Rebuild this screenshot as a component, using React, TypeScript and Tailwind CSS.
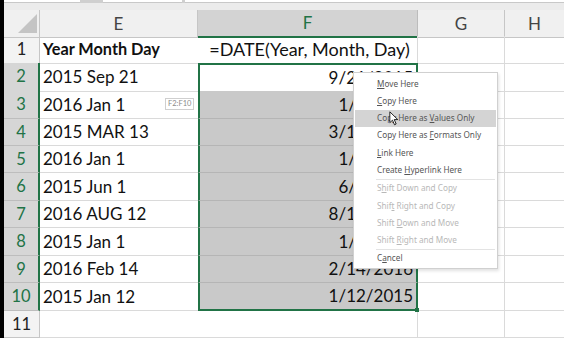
import React from "react";

const GREEN = "#217346";

type Row = { n: number; e: string; f: string; h: string };

const ROWS: Row[] = [
  { n: 1, e: "Year Month Day", f: "=DATE(Year, Month, Day)", h: "h-[27px]" },
  { n: 2, e: "2015 Sep 21", f: "9/21/2015", h: "h-[28px]" },
  { n: 3, e: "2016 Jan 1", f: "1/1/2016", h: "h-[28px]" },
  { n: 4, e: "2015 MAR 13", f: "3/13/2015", h: "h-[27px]" },
  { n: 5, e: "2016 Jan 1", f: "1/1/2016", h: "h-[27px]" },
  { n: 6, e: "2015 Jun 1", f: "6/1/2015", h: "h-[28px]" },
  { n: 7, e: "2016 AUG 12", f: "8/12/2016", h: "h-[27px]" },
  { n: 8, e: "2015 Jan 1", f: "1/1/2015", h: "h-[28px]" },
  { n: 9, e: "2016 Feb 14", f: "2/14/2016", h: "h-[27px]" },
  { n: 10, e: "2015 Jan 12", f: "1/12/2015", h: "h-[28px]" },
  { n: 11, e: "", f: "", h: "h-[27px]" },
];

type Item = { label: string; at: number; disabled?: boolean; active?: boolean } | "sep";

const MENU: Item[] = [
  { label: "Move Here", at: 0 },
  { label: "Copy Here", at: 0 },
  { label: "Copy Here as Values Only", at: 13, active: true },
  { label: "Copy Here as Formats Only", at: 13 },
  { label: "Link Here", at: 0 },
  { label: "Create Hyperlink Here", at: 7 },
  "sep",
  { label: "Shift Down and Copy", at: 1, disabled: true },
  { label: "Shift Right and Copy", at: 4, disabled: true },
  { label: "Shift Down and Move", at: 6, disabled: true },
  { label: "Shift Right and Move", at: 6, disabled: true },
  "sep",
  { label: "Cancel", at: 1 },
];

// label with the access key underlined, kept in one span so spaces survive
function Accel({ text, at }: { text: string; at: number }) {
  return (
    <span className="whitespace-pre">
      {text.slice(0, at)}
      <span className="underline underline-offset-[1px]">{text[at]}</span>
      {text.slice(at + 1)}
    </span>
  );
}

function DropMenu() {
  return (
    <div className="absolute left-[353px] top-[72px] flex w-[145px] flex-col border border-[#d0d0d0] bg-white pb-[1px] pt-[2px] shadow-[1px_2px_3px_rgba(0,0,0,0.12)] font-['Noto_Sans',sans-serif] text-[8.2px]">
      {MENU.map((it, i) =>
        it === "sep" ? (
          <div key={i} className="ml-[22px] mr-[2px] h-[1px] bg-[#e3e3e3]" />
        ) : (
          <div
            key={i}
            className={
              "mx-[1px] flex h-[17.3px] items-center pl-[22px] " +
              (it.active ? "bg-[#d4d4d4] " : "") +
              (it.disabled ? "text-[#b8b8b8]" : "text-[#555555]")
            }
          >
            <Accel text={it.label} at={it.at} />
          </div>
        )
      )}
    </div>
  );
}

function Cursor() {
  return (
    <svg
      className="absolute left-[389px] top-[111px]"
      width="10"
      height="15"
      viewBox="0 0 12 18"
    >
      <path
        d="M1 1 L1 14 L4.2 11 L6.6 16.5 L8.6 15.6 L6.3 10.3 L10.5 10.3 Z"
        fill="white"
        stroke="black"
        strokeWidth="1"
        strokeLinejoin="round"
      />
    </svg>
  );
}

export default function App() {
  return (
    <div className="relative h-[338px] w-[564px] overflow-hidden bg-white font-['Lato',sans-serif]">
      {/* ribbon remnant */}
      <div className="flex h-[3px] bg-[#cfcfcf]">
        <div className="w-[4px] bg-black" />
        <div className="w-[76px] border-b border-[#c8c8c8] bg-white" />
        <div className="ml-[23px] w-[79px] border-b border-[#c8c8c8] bg-white" />
        <div className="ml-[3px] flex-1 border-b border-[#c8c8c8] bg-white" />
      </div>
      <div className="flex h-[7px]">
        <div className="w-[4px] bg-black" />
        <div className="flex-1 bg-[#ebebeb]" />
      </div>

      {/* column headers */}
      <div className="grid h-[26px] grid-cols-[4px_36px_158px_220px_87px_1fr] text-[17px] text-[#444444]">
        <div className="bg-black" />
        <div className="relative border-b border-r border-[#c6c6c6] bg-[#f0f0f0]">
          <svg className="absolute left-[13px] top-[3px]" width="21" height="21" viewBox="0 0 21 21">
            <path d="M20 1 L20 20 L1 20 Z" fill="#c4c4c4" />
          </svg>
        </div>
        <div className="flex items-center justify-center border-b border-r border-[#c6c6c6] bg-[#f0f0f0]">E</div>
        <div
          className="flex items-center justify-center border-b-2 border-r border-b-[#217346] border-r-[#bcbcbc] bg-[#d3d3d3]"
          style={{ color: GREEN }}
        >
          F
        </div>
        <div className="flex items-center justify-center border-b border-r border-[#c6c6c6] bg-[#f0f0f0]">G</div>
        <div className="flex items-center justify-center border-b border-[#c6c6c6] bg-[#f0f0f0]">H</div>
      </div>

      {ROWS.map((r) => {
        const sel = r.n >= 2 && r.n <= 10;
        return (
          <div
            key={r.n}
            className={"grid grid-cols-[4px_36px_158px_220px_87px_1fr] text-[17px] text-[#111111] " + r.h}
          >
            <div className="bg-black" />
            <div
              className={
                "flex items-center justify-center border-b text-[16.5px] " +
                (sel
                  ? "border-r-2 border-b-[#bdbdbd] border-r-[#217346] bg-[#d6d6d6] text-[#217346]"
                  : "border-r border-[#c6c6c6] bg-[#f3f3f3] text-[#222222]")
              }
            >
              {r.n}
            </div>
            <div className="relative flex items-center border-b border-[#dadada] pl-[3px]">
              <span className={r.n === 1 ? "text-[16.3px] font-bold" : ""}>{r.e}</span>
              {r.n === 3 && (
                <span className="absolute left-[125px] top-[7px] border border-[#cfcfcf] bg-white px-[2px] text-[7.5px] leading-[10px] text-[#8a8a8a]">
                  F2:F10
                </span>
              )}
            </div>
            {r.n === 1 ? (
              <div className="flex items-center justify-center border-b border-r border-[#dadada] pl-[4px] text-[18px]">
                {r.f}
              </div>
            ) : sel ? (
              <div
                className={
                  "relative flex items-center justify-end border-x-2 border-x-[#217346] pr-[3px] " +
                  (r.n === 2 ? "border-t-2 border-t-[#217346] bg-white " : "bg-[#c9c9c9] ") +
                  (r.n === 10 ? "border-b-2 border-b-[#217346]" : "border-b border-b-[#b5b5b5]")
                }
              >
                {r.f}
                {r.n === 10 && (
                  <span className="absolute -bottom-[3px] -right-[3px] h-[4px] w-[4px] bg-[#217346]" />
                )}
              </div>
            ) : (
              <div className="border-b border-r border-[#dadada]" />
            )}
            <div className="border-b border-r border-[#dadada]" />
            <div className="border-b border-[#dadada]" />
          </div>
        );
      })}

      <DropMenu />
      <Cursor />
    </div>
  );
}
